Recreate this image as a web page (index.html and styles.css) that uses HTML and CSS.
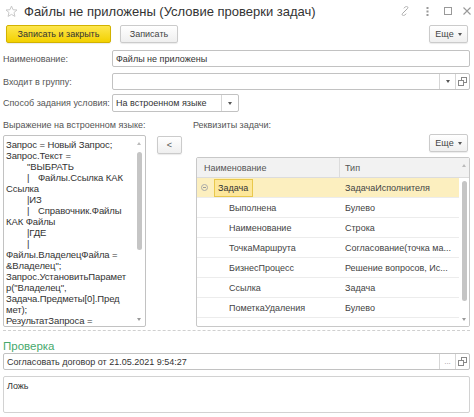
FILE: index.html
```html
<!DOCTYPE html>
<html lang="ru">
<head>
<meta charset="utf-8">
<title>Файлы не приложены</title>
<link rel="stylesheet" href="styles.css">
</head>
<body>
<div class="window">
  <header class="titlebar">
    <svg class="star" viewBox="0 0 14 14" width="13" height="13"><path d="M7 1.2 L8.7 5.1 L12.9 5.4 L9.7 8.1 L10.7 12.3 L7 10.1 L3.3 12.3 L4.3 8.1 L1.1 5.4 L5.3 5.1 Z" fill="none" stroke="#c4c4c4" stroke-width="1"/></svg>
    <h1 class="title">Файлы не приложены (Условие проверки задач)</h1>
    <div class="win-icons">
      <svg class="ico-link" viewBox="0 0 10 10" width="10" height="10"><g fill="none" stroke="#aaa" stroke-width="1"><path d="M4.2 5.8 L2.6 7.4 a1.3 1.3 0 0 0 1.9 1.9 L6.1 7.7"/><path d="M5.8 4.2 L7.4 2.6 a1.3 1.3 0 0 0 -1.9 -1.9 L3.9 2.3"/><path d="M3.9 6.1 L6.1 3.9"/></g></svg>
      <svg class="ico-dots" viewBox="0 0 3 10" width="3" height="10"><g fill="#999"><rect x="0.5" y="1" width="2" height="2"/><rect x="0.5" y="4.5" width="2" height="2"/><rect x="0.5" y="8" width="2" height="2"/></g></svg>
      <svg class="ico-max" viewBox="0 0 8 8" width="8" height="8"><rect x="0.5" y="0.5" width="7" height="7" fill="none" stroke="#999" stroke-width="1"/></svg>
      <svg class="ico-close" viewBox="0 0 8 8" width="8" height="8"><path d="M0.5 0.5 L7.5 7.5 M7.5 0.5 L0.5 7.5" stroke="#999" stroke-width="1.1"/></svg>
    </div>
  </header>

  <div class="toolbar">
    <button class="btn btn-primary">Записать и закрыть</button>
    <button class="btn btn-save">Записать</button>
    <span class="spacer"></span>
    <button class="btn btn-more">Еще <span class="caret"></span></button>
  </div>

  <div class="field f1">
    <label class="lbl">Наименование:</label>
    <div class="input grow"><span class="val">Файлы не приложены</span></div>
  </div>
  <div class="field f2">
    <label class="lbl">Входит в группу:</label>
    <div class="input grow">
      <span class="val"></span>
      <span class="seg"><span class="caret"></span></span>
      <span class="seg seg-open"><svg viewBox="0 0 9 9" width="9" height="9"><rect x="3.5" y="0.5" width="5" height="5" fill="#fff" stroke="#888"/><rect x="0.5" y="3.5" width="5" height="5" fill="#fff" stroke="#888"/></svg></span>
    </div>
  </div>
  <div class="field f3">
    <label class="lbl">Способ задания условия:</label>
    <div class="input select"><span class="val">На встроенном языке</span><span class="seg"><span class="caret"></span></span></div>
  </div>

  <div class="columns">
    <div class="col-left">
      <div class="cap">Выражение на встроенном языке:</div>
      <div class="code-box">
        <div class="code">
          <div>Запрос = Новый Запрос;</div>
          <div>Запрос.Текст =</div>
          <div class="i1">"ВЫБРАТЬ</div>
          <div class="i1"><span class="bar">|</span>Файлы.Ссылка КАК</div>
          <div>Ссылка</div>
          <div class="i1">|ИЗ</div>
          <div class="i1"><span class="bar">|</span>Справочник.Файлы</div>
          <div>КАК Файлы</div>
          <div class="i1">|ГДЕ</div>
          <div class="i1">|</div>
          <div>Файлы.ВладелецФайла =</div>
          <div>&amp;Владелец";</div>
          <div>Запрос.УстановитьПарамет</div>
          <div>р("Владелец",</div>
          <div>Задача.Предметы[0].Пред</div>
          <div>мет);</div>
          <div>РезультатЗапроса =</div>
        </div>
        <div class="vscroll code-scroll">
          <span class="arr-up"></span>
          <div class="track"><div class="thumb thumb-code"></div></div>
          <span class="arr-down"></span>
        </div>
      </div>
    </div>

    <div class="col-mid">
      <button class="btn btn-back">&lt;</button>
    </div>

    <div class="col-right">
      <div class="cap cap-right">Реквизиты задачи:</div>
      <div class="right-bar"><button class="btn btn-more">Еще <span class="caret"></span></button></div>
      <div class="table">
        <div class="grid">
          <div class="thead">
            <div class="c-name">Наименование</div>
            <div class="c-type">Тип</div>
          </div>
          <div class="row sel">
            <div class="c-name tree"><span class="collapse"></span><span class="cur">Задача</span></div>
            <div class="c-type">ЗадачаИсполнителя</div>
          </div>
          <div class="row"><div class="c-name child">Выполнена</div><div class="c-type">Булево</div></div>
          <div class="row"><div class="c-name child">Наименование</div><div class="c-type">Строка</div></div>
          <div class="row"><div class="c-name child">ТочкаМаршрута</div><div class="c-type">Согласование(точка ма...</div></div>
          <div class="row"><div class="c-name child">БизнесПроцесс</div><div class="c-type">Решение вопросов, Ис...</div></div>
          <div class="row"><div class="c-name child">Ссылка</div><div class="c-type">Задача</div></div>
          <div class="row"><div class="c-name child">ПометкаУдаления</div><div class="c-type">Булево</div></div>
        </div>
        <div class="vscroll table-scroll">
          <div class="sc-head"><span class="arr-up"></span></div>
          <div class="track"><div class="thumb thumb-table"></div></div>
          <span class="arr-down"></span>
        </div>
      </div>
    </div>
  </div>

  <div class="dotted"></div>
  <div class="section">Проверка</div>
  <div class="input wide">
    <span class="val">Согласовать договор от 21.05.2021 9:54:27</span>
    <span class="seg seg-dots">...</span>
    <span class="seg seg-open"><svg viewBox="0 0 9 9" width="9" height="9"><rect x="3.5" y="0.5" width="5" height="5" fill="#fff" stroke="#888"/><rect x="0.5" y="3.5" width="5" height="5" fill="#fff" stroke="#888"/></svg></span>
  </div>
  <div class="memo">Ложь</div>
</div>
</body>
</html>
```

FILE: styles.css
```css
* { box-sizing: border-box; }
body {
  margin: 0;
  background: #fff;
  font-family: "Liberation Sans", Arial, sans-serif;
  font-size: 9px;
  color: #4a4a4a;
}
.window {
  width: 474px;
  height: 417px;
  overflow: hidden;
  padding: 0 4px 0 3px;
}

/* title */
.titlebar {
  display: flex;
  align-items: center;
  height: 22px;
}
.star { margin-left: 2px; margin-right: 6px; flex: none; }
.title {
  margin: 0;
  flex: 1;
  font-size: 13px;
  font-weight: normal;
  color: #333;
  white-space: nowrap;
}
.win-icons { display: flex; align-items: center; margin-right: -1px; }
.ico-link { margin-right: 16px; }
.ico-dots { margin-right: 15px; }
.ico-max { margin-right: 11px; }

/* buttons */
.toolbar {
  display: flex;
  align-items: center;
  margin-top: 3px;
  height: 18px;
}
.spacer { flex: 1; }
.btn {
  height: 18px;
  border: 1px solid #cbcbcb;
  border-radius: 2px;
  background: linear-gradient(#ffffff, #efefef);
  box-shadow: 0 1px 1px rgba(0,0,0,0.08);
  font-family: inherit;
  font-size: 9px;
  color: #444;
  padding: 0 6px;
  white-space: nowrap;
  display: inline-flex;
  align-items: center;
  justify-content: center;
}
.btn-primary {
  width: 105px;
  margin-left: 3px;
  background: linear-gradient(#fde64e, #f3d100);
  border-color: #d2b200;
  color: #333;
}
.btn-save { width: 58px; margin-left: 9px; }
.btn-more { width: 39px; padding: 0 5px; margin-right: 2px; }
.caret {
  display: inline-block;
  width: 0; height: 0;
  border-left: 2px solid transparent;
  border-right: 2px solid transparent;
  border-top: 3px solid #555;
  margin-left: 4px;
}

/* fields */
.field { display: flex; align-items: center; height: 17px; }
.f1 { margin-top: 7px; }
.f2 { margin-top: 6px; }
.f3 { margin-top: 4px; height: 18px; }
.lbl { width: 109px; flex: none; color: #555; white-space: nowrap; }
.input {
  display: flex;
  align-items: stretch;
  height: 100%;
  border: 1px solid #c2c2c2;
  border-radius: 2px;
  background: #fff;
  color: #333;
}
.input.grow { flex: 1; }
.input .val {
  flex: 1;
  display: flex;
  align-items: center;
  padding-left: 3px;
  white-space: nowrap;
  overflow: hidden;
}
.seg {
  width: 16px;
  flex: none;
  border-left: 1px solid #d6d6d6;
  display: flex;
  align-items: center;
  justify-content: center;
}
.seg .caret { margin-left: 0; }
.seg-open { width: 14px; }
.seg-dots { color: #999; font-size: 8px; align-items: flex-end; padding-bottom: 3px; }
.select { width: 127px; height: 18px; }
.select .seg { width: 17px; }

/* columns */
.columns { display: flex; margin-top: 8px; height: 207px; }
.cap { height: 11px; line-height: 11px; color: #555; white-space: nowrap; flex: none; }
.col-left { width: 143px; flex: none; display: flex; flex-direction: column; }
.code-box {
  margin-top: 4px;
  height: 192px;
  flex: none;
  border: 1px solid #c2c2c2;
  border-radius: 2px;
  display: flex;
  overflow: hidden;
}
.code {
  flex: 1;
  padding: 3px 0 0 2px;
  font-size: 9.5px;
  line-height: 11px;
  letter-spacing: -0.1px;
  color: #333;
  white-space: nowrap;
  overflow: hidden;
}
.code .i1 { padding-left: 21px; }
.code .bar { display: inline-block; width: 11px; }

.vscroll {
  width: 10px;
  flex: none;
  display: flex;
  flex-direction: column;
  align-items: center;
}
.arr-up, .arr-down {
  display: block;
  width: 0; height: 0;
  border-left: 2px solid transparent;
  border-right: 2px solid transparent;
  flex: none;
}
.arr-up { border-bottom: 3px solid #bbb; }
.arr-down { border-top: 3px solid #999; margin-bottom: 5px; }
.track { flex: 1; width: 100%; display: flex; justify-content: center; }
.thumb { width: 5px; border-radius: 3px; background: #c5c5c5; }
.code-scroll { padding-top: 6px; margin-right: 1px; }
.thumb-code { margin-top: 7px; height: 98px; }

.col-mid { width: 50px; flex: none; padding: 16px 0 0 11px; }
.btn-back { width: 25px; height: 18px; padding: 0; color: #555; }

.col-right { flex: 1; display: flex; flex-direction: column; margin-left: -3px; }
.right-bar { display: flex; justify-content: flex-end; margin-top: 3px; height: 18px; flex: none; }
.table {
  margin-top: 5px;
  margin-left: 3px;
  height: 170px;
  flex: none;
  border: 1px solid #c8c8c8;
  border-radius: 2px;
  display: flex;
  overflow: hidden;
}
.grid { flex: 1; display: flex; flex-direction: column; }
.thead, .row { display: flex; height: 20px; align-items: center; flex: none; }
.thead { background: #f2f2f2; border-bottom: 1px solid #dcdcdc; color: #555; }
.thead .c-name { border-right: 1px solid #dcdcdc; height: 100%; display: flex; align-items: center; }
.row { border-bottom: 1px solid #ececec; color: #444; }
.c-name { width: 143px; flex: none; padding-left: 7px; white-space: nowrap; }
.c-type { flex: 1; padding-left: 5px; white-space: nowrap; overflow: hidden; }
.row.sel { background: #fcefbf; }
.tree { padding-left: 4px; display: flex; align-items: center; }
.collapse {
  width: 7px; height: 7px;
  border: 1px solid #aaa;
  border-radius: 50%;
  margin-right: 6px;
  display: flex;
  align-items: center;
  justify-content: center;
}
.collapse::after { content: ""; width: 3px; height: 1px; background: #999; }
.cur {
  border: 1px solid #e9c84c;
  background: #fde79a;
  padding: 3px 4px 3px 3px;
  line-height: 10px;
  color: #333;
}
.child { padding-left: 32px; }
.table-scroll { background: #fff; }
.sc-head {
  height: 20px; width: 100%;
  background: #f2f2f2;
  border-bottom: 1px solid #dcdcdc;
  display: flex; justify-content: center; padding-top: 6px;
}
.thumb-table { margin-top: 3px; height: 120px; }

.dotted { margin-top: 3px; border-top: 1px dashed #d0d0d0; }
.section {
  margin-top: 9px;
  font-size: 11.5px;
  line-height: 13px;
  color: #47a96c;
}
.input.wide { margin-top: 0; height: 17px; }
.memo {
  margin-top: 6px;
  height: 37px;
  border: 1px solid #d2d2d2;
  border-radius: 2px;
  padding: 4px 3px;
  color: #333;
}
```
